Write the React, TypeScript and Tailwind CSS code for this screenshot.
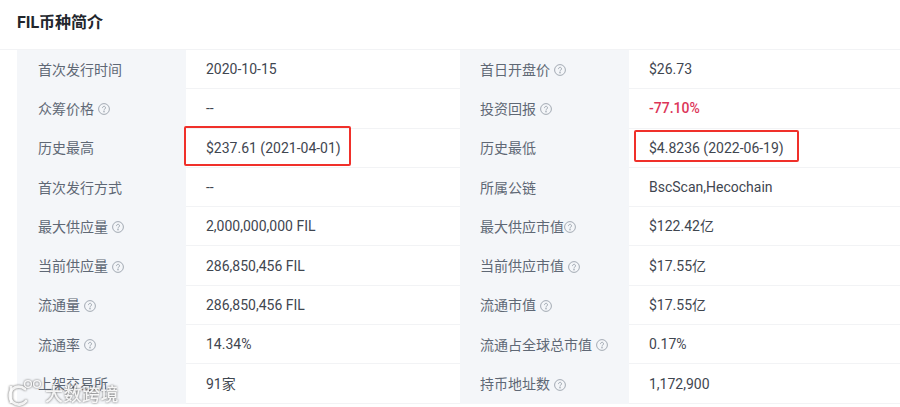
import { FunctionComponent, ReactElement } from 'react';

interface Cell {
  readonly label: string;
  readonly value: string;
  readonly hint?: boolean;
  readonly tone?: string;
  readonly tightHint?: boolean;
}

const rows: ReadonlyArray<readonly [Cell, Cell]> = [
  [{ label: '首次发行时间', value: '2020-10-15' }, { label: '首日开盘价', value: '$26.73', hint: true }],
  [{ label: '众筹价格', value: '--', hint: true }, { label: '投资回报', value: '-77.10%', hint: true, tone: 'text-[#dc3558] font-medium' }],
  [{ label: '历史最高', value: '$237.61 (2021-04-01)' }, { label: '历史最低', value: '$4.8236 (2022-06-19)' }],
  [{ label: '首次发行方式', value: '--' }, { label: '所属公链', value: 'BscScan,Hecochain' }],
  [{ label: '最大供应量', value: '2,000,000,000 FIL', hint: true }, { label: '最大供应市值', value: '$122.42亿', hint: true, tightHint: true }],
  [{ label: '当前供应量', value: '286,850,456 FIL', hint: true }, { label: '当前供应市值', value: '$17.55亿', hint: true }],
  [{ label: '流通量', value: '286,850,456 FIL', hint: true }, { label: '流通市值', value: '$17.55亿', hint: true }],
  [{ label: '流通率', value: '14.34%', hint: true }, { label: '流通占全球总市值', value: '0.17%', hint: true }],
  [{ label: '上架交易所', value: '91家' }, { label: '持币地址数', value: '1,172,900', hint: true }],
];

const HintIcon: FunctionComponent<{ readonly tight?: boolean }> = ({ tight }): ReactElement => (
  <svg width="12" height="12" viewBox="0 0 12 12" fill="none" stroke="#9aa1ab" strokeWidth="0.9" className={`${tight ? 'ml-0' : 'ml-1'} mt-[1px] shrink-0`}>
    <circle cx="6" cy="6" r="5.4" />
    <path d="M4.5 4.7a1.5 1.5 0 1 1 2.3 1.3c-.5.3-.8.6-.8 1.2" strokeLinecap="round" />
    <circle cx="6" cy="8.8" r="0.35" fill="#9aa1ab" />
  </svg>
);

const InfoCell: FunctionComponent<{ readonly cell: Cell; readonly right?: boolean }> = ({ cell, right }): ReactElement => (
  <div className={`flex ${right ? 'w-[440px]' : 'w-[443px]'}`}>
    <div className={`w-[169px] shrink-0 flex items-center ${right ? 'pl-5' : 'pl-[21px]'} bg-[#f4f6f9] text-[#5f6875]`}>
      <span>{cell.label}</span>
      {cell.hint && <HintIcon tight={cell.tightHint} />}
    </div>
    <div className={`flex-1 flex items-center pl-5 border-b border-[#f2f3f5] ${cell.tone ?? 'text-[#3f4650]'}`}>
      {cell.value}
    </div>
  </div>
);

const App: FunctionComponent = (): ReactElement => {
  return (
    <div className="relative w-[900px] h-[407px] overflow-hidden bg-white text-sm font-['Roboto','Noto_Sans_CJK_SC',sans-serif]">
      <h2 className="pl-[17px] pt-[11px] h-[50px] text-base font-bold text-[#22262c] border-b border-[#f2f3f5]">FIL币种简介</h2>
      <div className="flex flex-col pl-[17px]">
        {rows.map(([left, right]) => (
          <div className="flex h-[39.3px]" key={`row-${left.label}`}>
            <InfoCell cell={left} />
            <InfoCell cell={right} right />
          </div>
        ))}
      </div>

      {/* red annotation boxes drawn over the table */}
      <div className="absolute left-[184px] top-[126px] w-[167px] h-[40px] border-[2px] border-[#f0302a] rounded-[2px]" />
      <div className="absolute left-[634px] top-[130px] w-[165px] h-[32px] border-[2px] border-[#f0302a] rounded-[2px]" />

      {/* watermark */}
      <div className="absolute left-[8px] top-[378px] flex items-center text-white/90 [filter:drop-shadow(0_0_1px_rgba(60,60,60,0.9))]">
        <svg width="36" height="28" viewBox="0 0 36 28" fill="none" stroke="currentColor" strokeWidth="2.8">
          <path d="M3 7v17" />
          <path d="M17 10a9 9 0 1 0 1 12" strokeLinecap="round" />
          <circle cx="20" cy="5" r="3.4" strokeWidth="1.4" />
          <circle cx="29" cy="5" r="3.4" strokeWidth="1.4" />
        </svg>
        <span className="ml-[1px] mt-[4px] text-[18px] font-medium tracking-[0.5px]">大数跨境</span>
      </div>
    </div>
  );
};

export default App;
